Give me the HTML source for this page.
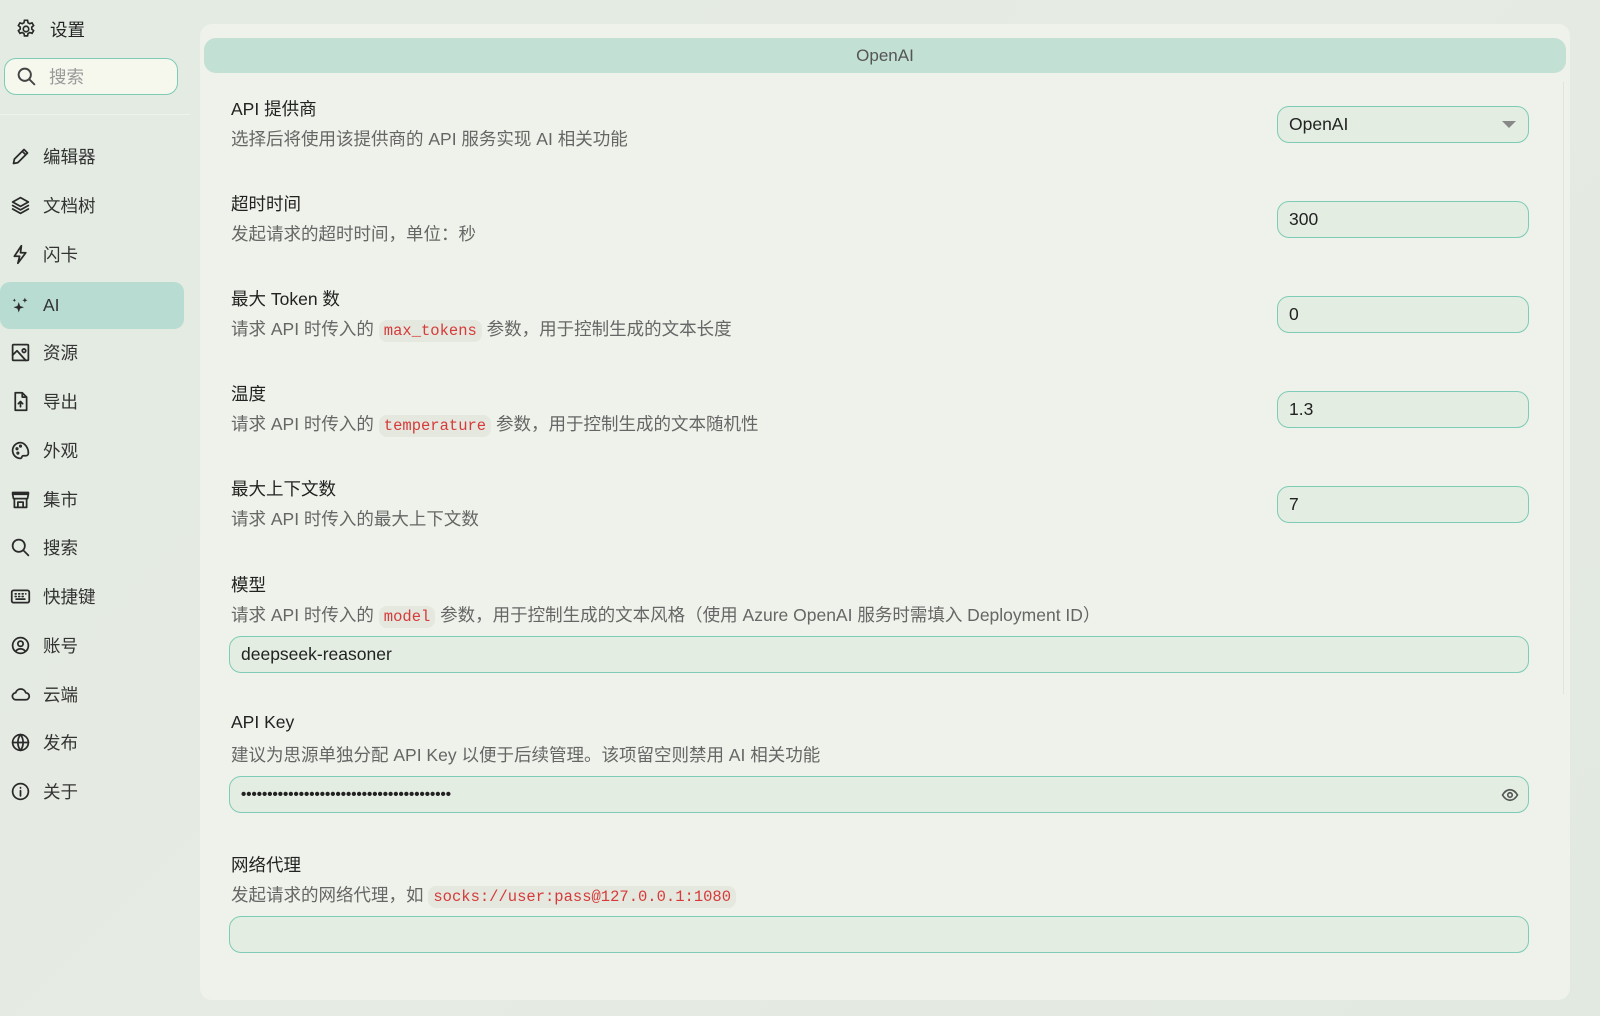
<!DOCTYPE html>
<html><head><meta charset="utf-8"><style>
*{box-sizing:border-box;margin:0;padding:0}
body{width:1600px;height:1016px;overflow:hidden;background:linear-gradient(135deg,#e3ebe2,#e6ebe3 50%,#e2e9e1);font-family:"Liberation Sans","Noto Sans CJK SC",sans-serif;color:#222;position:relative}
.a{position:absolute}
.side-item{position:absolute;left:0;width:184px;height:47px;display:flex;align-items:center;font-size:17.5px;color:#333}
.side-item svg{margin-left:10px;margin-right:12px;width:21px;height:21px;fill:none;stroke:#2a2a2a;stroke-width:2;stroke-linecap:round;stroke-linejoin:round}
.act{background:#b9dcd2;border-radius:10px}
.panel{left:200px;top:24px;width:1370px;height:976px;background:#eff2ea;border-radius:12px}
.hdr{left:204px;top:38px;width:1362px;height:35px;background:#c3e0d5;border-radius:12px;text-align:center;line-height:35px;font-size:17px;color:#555}
.t{position:absolute;left:231px;font-size:17.5px;color:#222}
.d{position:absolute;left:231px;font-size:17.5px;color:#666}
code{font-family:"Liberation Mono",monospace;color:#d73a3a;background:#e4e8de;border-radius:8px;padding:2px 5px;font-size:15.5px}
.in{position:absolute;background:#e3ede1;border:1px solid #7ecbb7;border-radius:12px;font-size:17.5px;color:#222;padding-left:11px;display:flex;align-items:center}
.r{left:1277px;width:252px;height:37px}
</style></head><body>
<svg class="a" style="left:15px;top:18px" width="22" height="22" viewBox="0 0 24 24" fill="none" stroke="#2a2a2a" stroke-width="1.8"><path d="M10.3 2.5h3.4l.5 2.6 1.9 1.1 2.5-.9 1.7 2.9-2 1.7v2.2l2 1.7-1.7 2.9-2.5-.9-1.9 1.1-.5 2.6h-3.4l-.5-2.6-1.9-1.1-2.5.9-1.7-2.9 2-1.7v-2.2l-2-1.7 1.7-2.9 2.5.9 1.9-1.1z"/><circle cx="12" cy="12" r="3"/></svg>
<div class="a" style="left:50px;top:17px;font-size:17.5px;color:#222">设置</div>
<div class="a" style="left:4px;top:58px;width:174px;height:37px;border:1px solid #7ecbb7;border-radius:12px;background:#f6f8ee"></div>
<svg class="a" style="left:16px;top:66px" width="21" height="21" viewBox="0 0 24 24" fill="none" stroke="#444" stroke-width="2.2" stroke-linecap="round"><circle cx="10" cy="10" r="7"/><path d="M15.5 15.5L21 21"/></svg>
<div class="a" style="left:49px;top:64px;font-size:17.5px;color:#999">搜索</div>
<div class="a" style="left:0;top:114px;width:190px;height:1px;background:#eef3ec"></div>

<div class="side-item" style="top:133px"><svg viewBox="0 0 24 24"><path d="M4 20l1-5L16 4l4 4L9 19z M14 6l4 4"/></svg>编辑器</div>
<div class="side-item" style="top:182px"><svg viewBox="0 0 24 24"><path d="M12 3l9 5-9 5-9-5z M3 12l9 5 9-5 M3 16l9 5 9-5"/></svg>文档树</div>
<div class="side-item" style="top:231px"><svg viewBox="0 0 24 24"><path d="M13 2L5 14h6l-2 8 9-12h-6z"/></svg>闪卡</div>
<div class="side-item act" style="top:282px"><svg viewBox="0 0 24 24" style="fill:#2a2a2a;stroke:none"><path d="M10 8l1.5 4.5L16 14l-4.5 1.5L10 20l-1.5-4.5L4 14l4.5-1.5z M17 3l.8 2.2L20 6l-2.2.8L17 9l-.8-2.2L14 6l2.2-.8z M5 4l.6 1.4L7 6l-1.4.6L5 8l-.6-1.4L3 6l1.4-.6z"/></svg>AI</div>
<div class="side-item" style="top:329px"><svg viewBox="0 0 24 24"><rect x="3" y="3" width="18" height="18" rx="1"/><path d="M3 15l5-5 10 11 M14 10a2 2 0 1 0 0-.1"/></svg>资源</div>
<div class="side-item" style="top:378px"><svg viewBox="0 0 24 24"><path d="M6 2h8l5 5v15H6z M14 2v5h5 M12 18v-6 M9.5 14.5L12 12l2.5 2.5"/></svg>导出</div>
<div class="side-item" style="top:427px"><svg viewBox="0 0 24 24"><path d="M12 3a9 9 0 1 0 0 18c2 0 1-3 3-3h3a3 3 0 0 0 3-3c0-7-5-12-9-12z"/><circle cx="8" cy="10" r=".8"/><circle cx="12" cy="7" r=".8"/><circle cx="9" cy="15" r=".8"/></svg>外观</div>
<div class="side-item" style="top:476px"><svg viewBox="0 0 24 24"><path d="M3 4h18v2H3z M3 6l1 5h16l1-5 M5 11v10h14V11 M9 21v-6h6v6"/></svg>集市</div>
<div class="side-item" style="top:524px"><svg viewBox="0 0 24 24"><circle cx="10" cy="10" r="7"/><path d="M15.5 15.5L21 21"/></svg>搜索</div>
<div class="side-item" style="top:573px"><svg viewBox="0 0 24 24"><rect x="2" y="5" width="20" height="14" rx="2"/><path d="M6 9h1 M10 9h1 M14 9h1 M18 9h0 M6 12h1 M10 12h1 M14 12h1 M7 15h10"/></svg>快捷键</div>
<div class="side-item" style="top:622px"><svg viewBox="0 0 24 24"><circle cx="12" cy="12" r="9"/><circle cx="12" cy="10" r="3"/><path d="M6.5 18.5a7 7 0 0 1 11 0"/></svg>账号</div>
<div class="side-item" style="top:671px"><svg viewBox="0 0 24 24"><path d="M7 18a4 4 0 0 1-.5-8A6 6 0 0 1 18 10a4 4 0 0 1 0 8z"/></svg>云端</div>
<div class="side-item" style="top:719px"><svg viewBox="0 0 24 24"><circle cx="12" cy="12" r="9"/><path d="M3 12h18 M12 3c-4 5-4 13 0 18 M12 3c4 5 4 13 0 18"/></svg>发布</div>
<div class="side-item" style="top:768px"><svg viewBox="0 0 24 24"><circle cx="12" cy="12" r="9"/><path d="M12 11v6 M12 7.5v.5"/></svg>关于</div>

<div class="a panel"></div>
<div class="a hdr">OpenAI</div>
<div class="a" style="left:1563px;top:82px;width:1px;height:612px;background:#e0e6d6"></div>

<div class="t" style="top:96px">API 提供商</div>
<div class="d" style="top:126px">选择后将使用该提供商的 API 服务实现 AI 相关功能</div>
<div class="in r" style="top:106px">OpenAI<svg class="a" style="right:12px;top:14px" width="14" height="8"><path d="M0 0h14L7 7z" fill="#888"/></svg></div>

<div class="t" style="top:191px">超时时间</div>
<div class="d" style="top:221px">发起请求的超时时间，单位：秒</div>
<div class="in r" style="top:201px">300</div>

<div class="t" style="top:286px">最大 Token 数</div>
<div class="d" style="top:316px">请求 API 时传入的 <code>max_tokens</code> 参数，用于控制生成的文本长度</div>
<div class="in r" style="top:296px">0</div>

<div class="t" style="top:381px">温度</div>
<div class="d" style="top:411px">请求 API 时传入的 <code>temperature</code> 参数，用于控制生成的文本随机性</div>
<div class="in r" style="top:391px">1.3</div>

<div class="t" style="top:476px">最大上下文数</div>
<div class="d" style="top:506px">请求 API 时传入的最大上下文数</div>
<div class="in r" style="top:486px">7</div>

<div class="t" style="top:572px">模型</div>
<div class="d" style="top:602px">请求 API 时传入的 <code>model</code> 参数，用于控制生成的文本风格（使用 Azure OpenAI 服务时需填入 Deployment ID）</div>
<div class="in" style="left:229px;top:636px;width:1300px;height:37px">deepseek-reasoner</div>

<div class="t" style="top:712px">API Key</div>
<div class="d" style="top:742px">建议为思源单独分配 API Key 以便于后续管理。该项留空则禁用 AI 相关功能</div>
<div class="in" style="left:229px;top:776px;width:1300px;height:37px;font-size:15px;font-weight:bold">••••••••••••••••••••••••••••••••••••••••<svg class="a" style="right:8px;top:9px" width="20" height="18" viewBox="0 0 24 24" fill="none" stroke="#555" stroke-width="2.2"><path d="M2 12c3-5 7-7 10-7s7 2 10 7c-3 5-7 7-10 7s-7-2-10-7z"/><circle cx="12" cy="12" r="3"/></svg></div>

<div class="t" style="top:852px">网络代理</div>
<div class="d" style="top:882px">发起请求的网络代理，如 <code>socks://user:pass@127.0.0.1:1080</code></div>
<div class="in" style="left:229px;top:916px;width:1300px;height:37px"></div>
</body></html>
